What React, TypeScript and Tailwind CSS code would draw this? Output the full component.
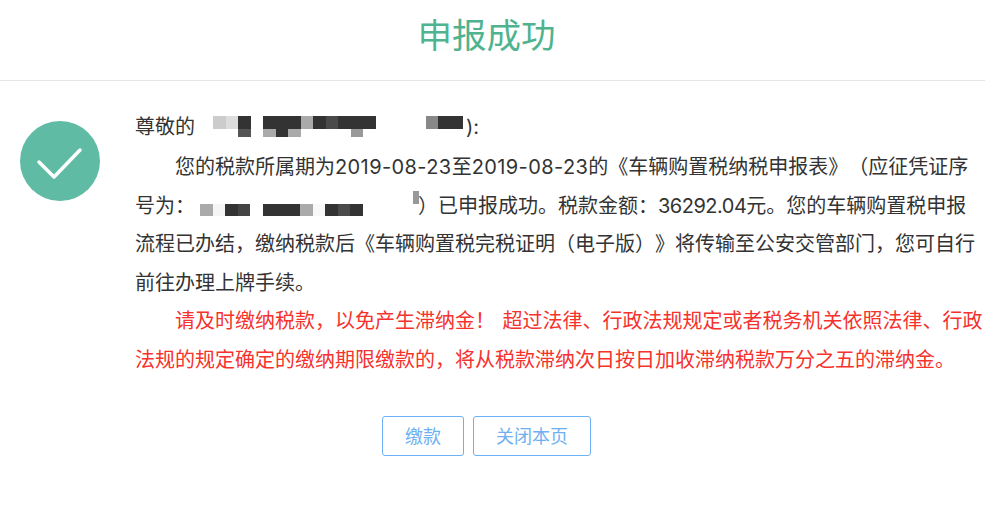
const font = "[font-family:Inter,'Noto_Sans_CJK_SC',sans-serif]";

// mosaic cells that hide the taxpayer name, one row per pixelated band
const nameTop = [
  "bg-[#ccc]", "bg-[#ddd]", "bg-[#333]", "bg-white", "bg-[#333]", "bg-[#333]", "bg-[#333]", "bg-[#aaa]", "bg-[#333]", "bg-[#4a4a4a]",
  "bg-[#333]", "bg-[#333]", "bg-[#333]", "bg-white", "bg-white", "bg-white", "bg-white", "bg-[#888]", "bg-[#333]", "bg-[#333]",
];
const nameBottom = [
  "bg-white", "bg-white", "bg-[#555]", "bg-white", "bg-[#aaa]", "bg-[#333]", "bg-[#aaa]", "bg-white", "bg-white", "bg-white",
  "bg-white", "bg-[#999]", "bg-white", "bg-white", "bg-white", "bg-white", "bg-white", "bg-white", "bg-white", "bg-white",
];
const certCells = [
  "bg-[#aaa]", "bg-[#f5f5f5]", "bg-[#333]", "bg-[#444]", "bg-white", "bg-[#333]", "bg-[#333]", "bg-[#333]", "bg-[#aaa]", "bg-[#f8f8f8]",
  "bg-[#333]", "bg-[#4a4a4a]", "bg-[#333]",
];

function Cells({ cells, height }: { cells: string[]; height: string }) {
  return (
    <span className={`flex ${height}`}>
      {cells.map((c, i) => (
        <span key={i} className={`w-[12.5px] ${c}`} />
      ))}
    </span>
  );
}

export default function App() {
  return (
    <div className={`w-[985px] h-[521px] bg-white text-[#333] [text-spacing-trim:space-all] ${font}`}>
      <header className="h-[81px] border-b border-[#e5e5e5] flex items-center justify-center pb-[8px] pr-[12px]">
        <h1 className="text-[34.5px] leading-none font-normal text-[#4fb38f]">申报成功</h1>
      </header>

      <div className="flex">
        <div className="w-[135px] shrink-0 pt-[40px] pl-[20px]">
          <div className="w-20 h-20 rounded-full bg-[#5fbba4] flex items-center justify-center">
            <svg width="48" height="40" viewBox="0 0 48 40" fill="none">
              <path d="M3 21 L18 36 L44 9" stroke="white" strokeWidth="3.5" strokeLinecap="round" strokeLinejoin="round" />
            </svg>
          </div>
        </div>

        <div className="w-[850px] pt-[27px] text-[20px] leading-[38.5px]">
          <p className="h-10">
            尊敬的
            <span className="relative inline-block w-[271px] h-0">
              <span className="absolute left-[18px] top-[-18px] flex flex-col">
                <Cells cells={nameTop} height="h-[13px]" />
                <Cells cells={nameBottom} height="h-[8px]" />
              </span>
            </span>
            ):
          </p>
          <p className="indent-[40px]">
            您的税款所属期为<span className="tracking-[0.4px]">2019-08-23</span>至<span className="tracking-[0.4px]">2019-08-23</span>的《车辆购置税纳税申报表》（应征凭证序号为：
            <span className="relative inline-block w-[223px] h-0 indent-0">
              <span className="absolute left-[5px] top-[-9px]">
                <Cells cells={certCells} height="h-[12px]" />
              </span>
              <span className="absolute left-[218px] top-[-22px] w-[6px] h-[13px] bg-[#999]" />
            </span>
            ）已申报成功。税款金额：<span className="tracking-[-0.5px]">36292.04</span>元。您的车辆购置税申报流程已办结，缴纳税款后《车辆购置税完税证明（电子版）》将传输至公安交管部门，您可自行前往办理上牌手续。
          </p>
          <p className="indent-[40px] text-[#f5322d] [word-spacing:2px]">
            请及时缴纳税款，以免产生滞纳金！ 超过法律、行政法规规定或者税务机关依照法律、行政法规的规定确定的缴纳期限缴款的，将从税款滞纳次日按日加收滞纳税款万分之五的滞纳金。
          </p>
        </div>
      </div>

      <div className="flex justify-center gap-[9px] mt-[37px] pr-[12px] text-[18px] text-[#6fb0f0]">
        <button className="w-[82px] h-10 rounded-[3px] border border-[#6db0f5] bg-white">缴款</button>
        <button className="w-[118px] h-10 rounded-[3px] border border-[#6db0f5] bg-white">关闭本页</button>
      </div>
    </div>
  );
}
